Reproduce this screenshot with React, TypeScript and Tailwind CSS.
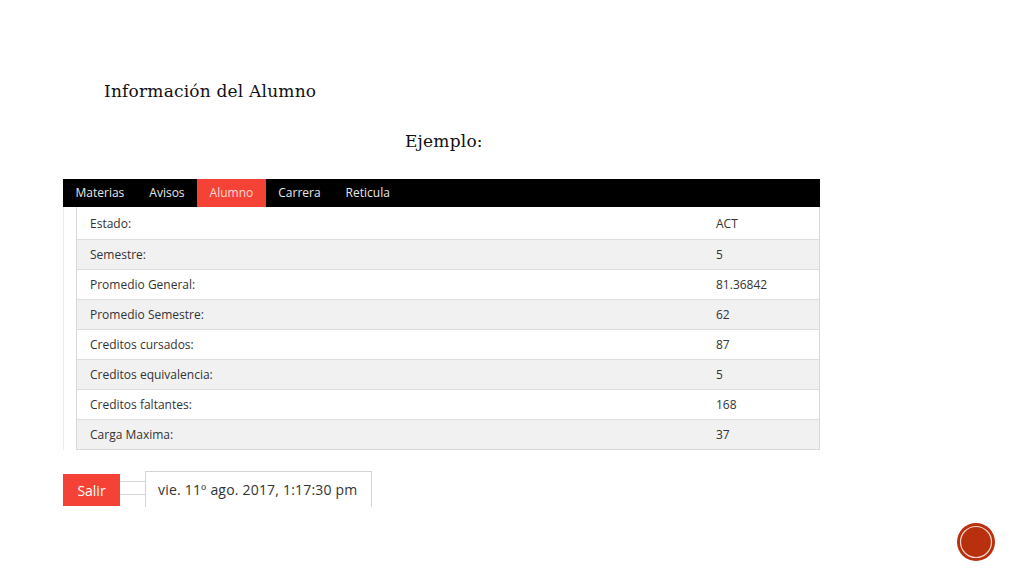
import React from "react";

const rows: [string, string][] = [
  ["Estado:", "ACT"],
  ["Semestre:", "5"],
  ["Promedio General:", "81.36842"],
  ["Promedio Semestre:", "62"],
  ["Creditos cursados:", "87"],
  ["Creditos equivalencia:", "5"],
  ["Creditos faltantes:", "168"],
  ["Carga Maxima:", "37"],
];

const tabs = ["Materias", "Avisos", "Alumno", "Carrera", "Reticula"];

export default function App() {
  return (
    <div className="w-[1024px] h-[576px] bg-white relative overflow-hidden">
      <div className="pt-[80px] pl-[104px] text-[17px] text-[#111] leading-[22px] tracking-[0.2px]" style={{ fontFamily: '"DejaVu Serif", serif' }}>
        Información del Alumno
      </div>
      <div className="pt-[28px] pl-[405px] text-[17px] text-[#111] leading-[22px] tracking-[0.2px]" style={{ fontFamily: '"DejaVu Serif", serif' }}>
        Ejemplo:
      </div>
      <div className="ml-[63px] mt-[27px] w-[757px]" style={{ fontFamily: '"Open Sans", sans-serif' }}>
        <div className="flex h-[28px] bg-black text-[12px] text-[#e8e8e8]">
          {tabs.map((t) => (
            <div
              key={t}
              className={`flex items-center px-[12.5px] ${t === "Alumno" ? "bg-[#f44336] text-[#ffd9d5]" : ""}`}
            >
              {t}
            </div>
          ))}
        </div>
        <div className="border-l border-[#ececec] pl-[12px]">
          <div className="pt-[2px] border-l border-r border-b border-[#d8d8d8]">
            {rows.map(([k, v], i) => (
              <div
                key={k}
                className={`flex h-[30px] items-center text-[12px] text-[#333] ${i % 2 === 1 ? "bg-[#f1f1f1]" : "bg-white"} ${i > 0 ? "border-t border-[#dedede]" : ""}`}
              >
                <div className="w-[639px] pl-[13px]">{k}</div>
                <div>{v}</div>
              </div>
            ))}
          </div>
        </div>
      </div>
      <div className="flex items-start ml-[63px] mt-[21px]" style={{ fontFamily: '"Open Sans", sans-serif' }}>
        <div className="mt-[3px] w-[57px] h-[32px] bg-[#f44336] text-white text-[14px] flex items-center justify-center">
          Salir
        </div>
        <div className="mt-[10px] w-[25px] h-[14px] border-t border-b border-[#d4d4d4]" />
        <div className="w-[227px] h-[36px] border-t border-l border-r border-[#d4d4d4] flex items-center pl-[12px] text-[14px] tracking-[0.2px] text-[#333]">
          vie. 11º ago. 2017, 1:17:30 pm
        </div>
      </div>
      <svg className="absolute left-[956px] top-[522px]" width="40" height="40" viewBox="0 0 40 40">
        <circle cx="20" cy="20" r="19" fill="#b8300e" />
        <circle cx="20" cy="20" r="15.5" fill="none" stroke="#f6d6c8" strokeWidth="1.2" />
      </svg>
    </div>
  );
}
